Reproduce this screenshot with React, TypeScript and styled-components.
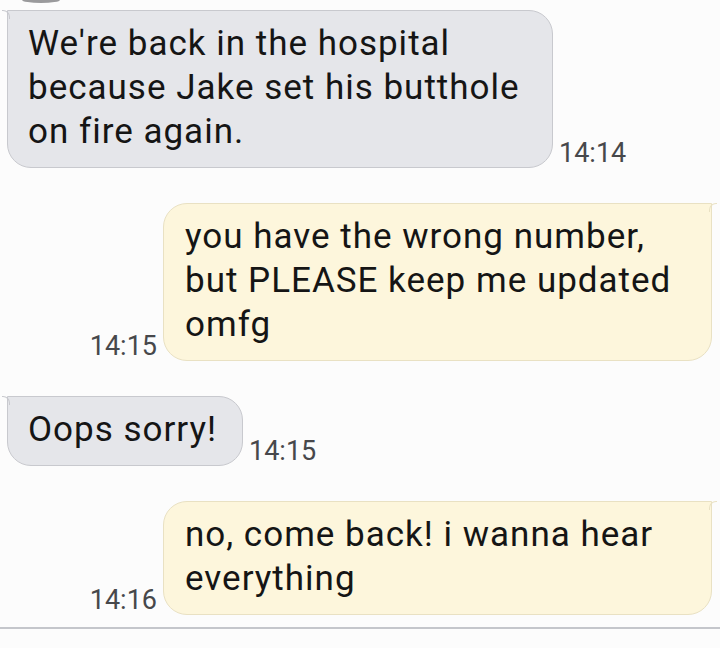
import React from 'react'
import styled, { createGlobalStyle, css } from 'styled-components'

type Side = 'in' | 'out'

type Message = {
  side: Side
  text: string
  time: string
  width: number
}

const messages: Message[] = [
  {
    side: 'in',
    text: "We're back in the hospital\nbecause Jake set his butthole\non fire again.",
    time: '14:14',
    width: 546,
  },
  {
    side: 'out',
    text: 'you have the wrong number,\nbut PLEASE keep me updated\nomfg',
    time: '14:15',
    width: 549,
  },
  { side: 'in', text: 'Oops sorry!', time: '14:15', width: 236 },
  {
    side: 'out',
    text: 'no, come back! i wanna hear\neverything',
    time: '14:16',
    width: 549,
  },
]

const GlobalStyle = createGlobalStyle`
  html, body {
    margin: 0;
    padding: 0;
    background: #fcfcfc;
  }
  body {
    font-family: Roboto, "Liberation Sans", sans-serif;
    color: #151515;
  }
`

const App = () => {
  return (
    <>
      <GlobalStyle />
      <Thread>
        <AvatarPeek />
        <List>
          {messages.map((m, i) => (
            <Row key={i} side={m.side}>
              {m.side === 'out' && <Time>{m.time}</Time>}
              <Bubble side={m.side} style={{ width: m.width }}>
                {m.text}
              </Bubble>
              {m.side === 'in' && <Time>{m.time}</Time>}
            </Row>
          ))}
        </List>
        <Composer />
      </Thread>
    </>
  )
}

const Thread = styled.main`
  width: 720px;
  height: 648px;
  display: flex;
  flex-direction: column;
  overflow: hidden;
`

const AvatarPeek = styled.div`
  width: 38px;
  height: 3px;
  margin-left: 22px;
  background: #9a9a9c;
  border-radius: 0 0 19px 19px / 0 0 3px 3px;
`

const List = styled.div`
  display: flex;
  flex-direction: column;
  gap: 35px;
  padding-top: 7px;
`

const Row = styled.div<{ side: Side }>`
  display: flex;
  align-items: flex-end;
  gap: 6px;
  ${({ side }) =>
    side === 'out'
      ? css`
          justify-content: flex-end;
          padding-right: 8px;
        `
      : css`
          justify-content: flex-start;
          padding-left: 7px;
        `}
`

const Bubble = styled.div<{ side: Side }>`
  position: relative;
  box-sizing: border-box;
  white-space: pre-line;
  font-size: 35px;
  letter-spacing: 1px;
  line-height: 44px;
  padding: 11px 12px 13px 20px;
  ${({ side }) =>
    side === 'in'
      ? css`
          background: #e5e6ea;
          border: 1.5px solid #c8c9ce;
          border-radius: 0 24px 24px 24px;
        `
      : css`
          background: #fdf6dc;
          border: 1.5px solid #e9e1c3;
          border-radius: 24px 0 24px 24px;
          padding-left: 21px;
        `}

  &::before {
    content: '';
    position: absolute;
    top: -1.5px;
    width: 7px;
    height: 8px;
    ${({ side }) =>
      side === 'in'
        ? css`
            left: -6px;
            border-top: 1.5px solid #c8c9ce;
            border-right: 1.5px solid #c8c9ce;
            border-top-right-radius: 7px;
          `
        : css`
            right: -6px;
            border-top: 1.5px solid #e9e1c3;
            border-left: 1.5px solid #e9e1c3;
            border-top-left-radius: 7px;
          `}
  }
`

const Time = styled.span`
  font-size: 27px;
  line-height: 1;
  color: #47484b;
  margin-bottom: 1px;
`

const Composer = styled.div`
  margin-top: auto;
  margin-bottom: 19px;
  height: 2px;
  background: #c4c6cb;
`

export default App
